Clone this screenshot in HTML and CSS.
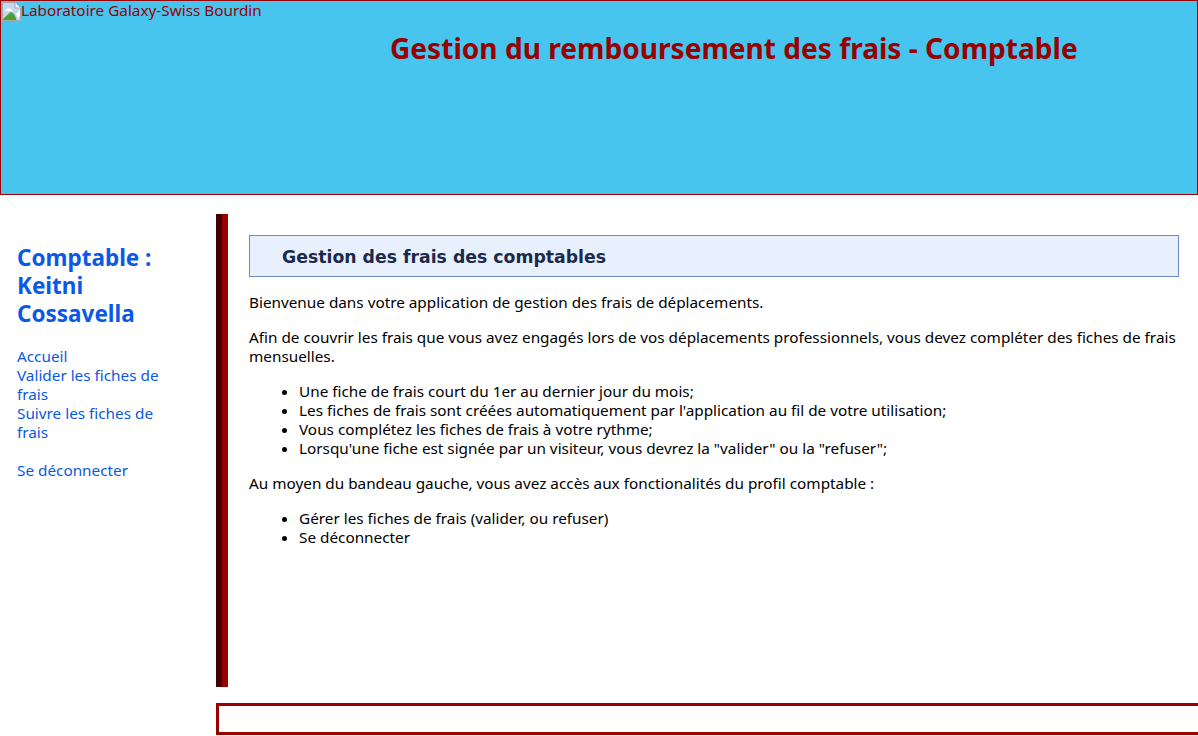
FILE: index.html
```html
<!DOCTYPE html>
<html lang="fr">
<head>
<meta charset="utf-8">
<title>Gestion des frais</title>
<link rel="stylesheet" href="styles.css">
</head>
<body>
<div class="page">
  <header class="banner">
    <div class="logo">
      <svg class="broken" viewBox="0 0 20 20" width="20" height="20" aria-hidden="true">
        <path d="M1.500 1.500H14L19.500 7V19.500H1.500Z" fill="#c4d6f5" stroke="#a8a8a8"/>
        <path d="M14 1.500V7H19.500" fill="#f2f2f2" stroke="#a8a8a8"/>
        <path d="M2 19V18L9 11.500C12 10.500 14 14 15.500 19Z" fill="#4f9e35"/>
        <path d="M4 10C5 6.500 10 6.500 12 10Z" fill="#fff"/>
        <path d="M15 13L19 9V14L17 17Z" fill="#fff"/>
      </svg><span>Laboratoire Galaxy-Swiss Bourdin</span>
    </div>
    <h1 class="banner-title">Gestion du remboursement des frais - Comptable</h1>
  </header>
  <div class="middle">
    <nav class="side">
      <h2 class="user">Comptable :<br>Keitni<br>Cossavella</h2>
      <ul class="menu">
        <li><a href="#">Accueil</a></li>
        <li><a href="#">Valider les fiches de frais</a></li>
        <li><a href="#">Suivre les fiches de frais</a></li>
        <li class="logout"><a href="#">Se déconnecter</a></li>
      </ul>
    </nav>
    <main class="content">
      <h2 class="content-title">Gestion des frais des comptables</h2>
      <p>Bienvenue dans votre application de gestion des frais de déplacements.</p>
      <p>Afin de couvrir les frais que vous avez engagés lors de vos déplacements professionnels, vous devez compléter des fiches de frais mensuelles.</p>
      <ul>
        <li>Une fiche de frais court du 1er au dernier jour du mois;</li>
        <li>Les fiches de frais sont créées automatiquement par l'application au fil de votre utilisation;</li>
        <li>Vous complétez les fiches de frais à votre rythme;</li>
        <li>Lorsqu'une fiche est signée par un visiteur, vous devrez la "valider" ou la "refuser";</li>
      </ul>
      <p>Au moyen du bandeau gauche, vous avez accès aux fonctionalités du profil comptable :</p>
      <ul>
        <li>Gérer les fiches de frais (valider, ou refuser)</li>
        <li>Se déconnecter</li>
      </ul>
    </main>
  </div>
  <footer class="foot"></footer>
</div>
</body>
</html>
```
FILE: styles.css
```css
* { box-sizing: border-box; }
html, body { margin: 0; padding: 0; background: #fff; }
body { font-family: "Noto Sans", sans-serif; font-size: 15.3px; line-height: 19px; color: #000; }
.page { display: flex; flex-direction: column; width: 1198px; height: 736px; overflow: hidden; }
.banner { display: flex; flex: 0 0 195px; border: 1px solid #900; background: #48c5ef; color: #900; }
.logo { flex: 0 0 389px; display: block; line-height: 19px; white-space: nowrap; }
.broken { vertical-align: top; }
.banner-title { margin: 29px 0 0 0; font-size: 28.1px; line-height: 36px; font-weight: bold; white-space: nowrap; }
.middle { display: flex; margin-top: 19px; height: 473px; }
.side { flex: 0 0 216px; padding: 30px 40px 0 17px; }
.user { margin: 0 0 19px; font-size: 22.5px; line-height: 28px; font-weight: bold; color: #0a58e6; }
.menu { list-style: none; margin: 0; padding: 0; }
.menu a { color: #0a58e6; text-decoration: none; }
.logout { margin-top: 19px; }
.content { flex: 1; padding: 21px 19px 0 21px; border-left: 12px solid #900; position: relative; }
.content::before { content: ""; position: absolute; left: -12px; top: 0; bottom: 0; width: 6px; background: #400; }
.content-title { margin: 0 0 16px; height: 42px; padding: 2px 0 0 32px; font-family: "DejaVu Sans", sans-serif; font-size: 17.3px; line-height: 38px; font-weight: bold; color: #1b2a4a; background: #e9f0fd; border: 1px solid #6b8cc9; }
.content p { margin: 0 0 16px; }
.content ul { margin: 0 0 16px; padding-left: 50px; }
.foot { margin: 16px -3px 0 216px; height: 32px; border: 3px solid #900; }
```
